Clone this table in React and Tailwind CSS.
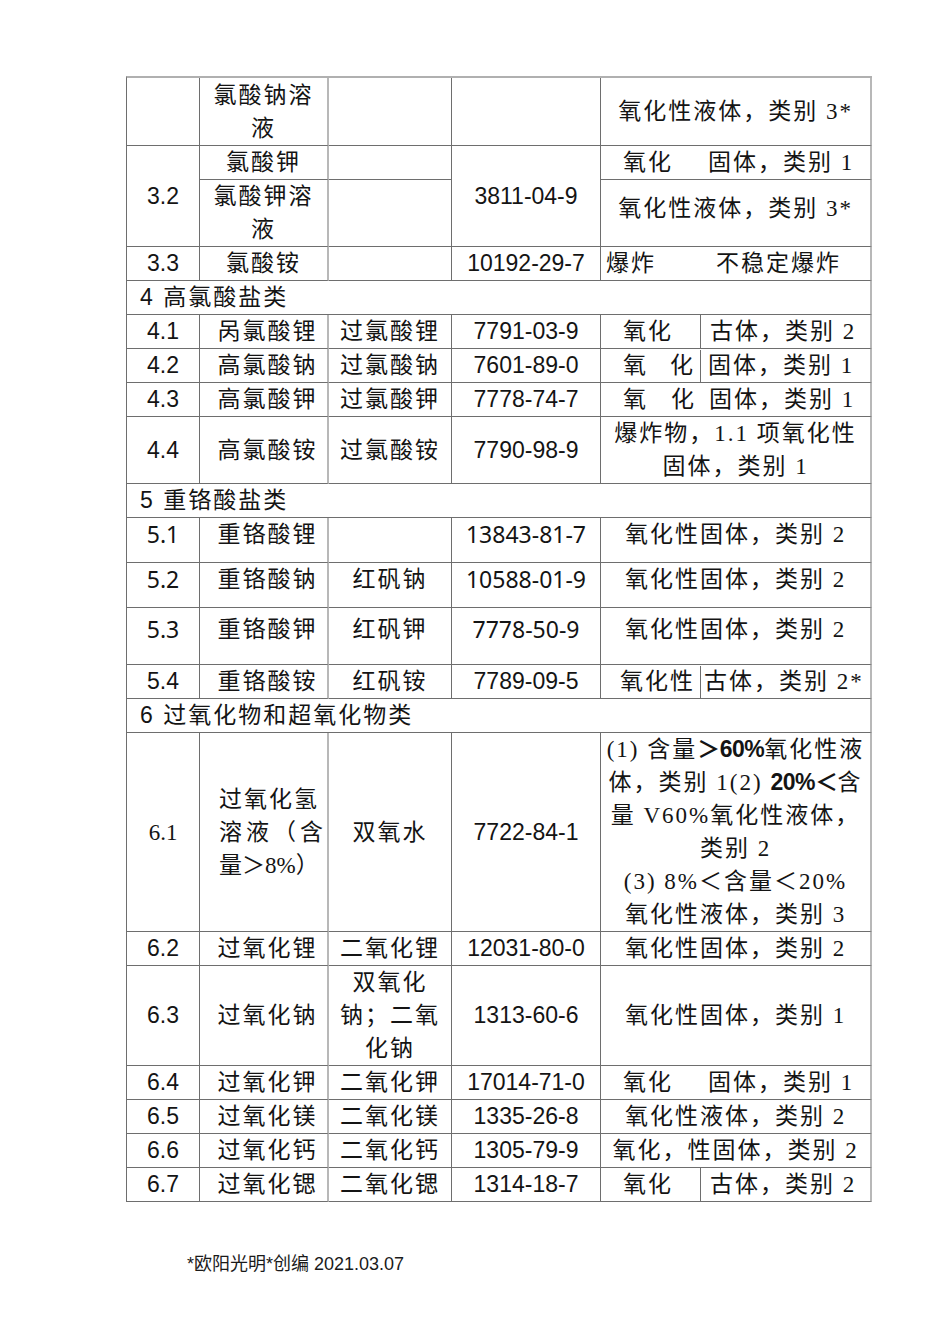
import React from 'react';

const SANS = "font-['Liberation_Sans','Noto_Sans_CJK_SC',sans-serif]";
const SERIF = "font-['Liberation_Serif','Noto_Sans_CJK_SC',serif]";

// right border variants: dark grid line, or the pale line used after the name column / at the table edge
const R_DARK = 'border-r border-r-[#6e6e6e]';
const R_PALE = 'border-r-2 border-r-[#b8b8b8]';

function Cell({ className = '', right = R_DARK, children, ...rest }) {
  return (
    <td
      className={`${right} border-b border-b-[#6e6e6e] p-0 text-center align-middle leading-[33px] text-[23px] text-[#141414] ${className}`}
      {...rest}
    >
      {children}
    </td>
  );
}

const Num = ({ children, serif, ...rest }) => (
  <Cell className={serif ? SERIF : SANS} {...rest}>{children}</Cell>
);
const Name = ({ children, className = '', ...rest }) => (
  <Cell right={R_PALE} className={`${SANS} tracking-[2px] ${className}`} {...rest}>{children}</Cell>
);
const Alias = ({ children, className = '', ...rest }) => (
  <Cell className={`${SANS} tracking-[2px] ${className}`} {...rest}>{children}</Cell>
);
const Cas = ({ children, ...rest }) => (
  <Cell className={SANS} {...rest}>{children}</Cell>
);
const Haz = ({ children, className = '', ...rest }) => (
  <Cell right={R_PALE} className={`${SERIF} tracking-[2px] ${className}`} {...rest}>{children}</Cell>
);

// hazard cell that is split (sometimes with a visible line) at x=700
function Split({ h, left, right, line, lcls, rcls }) {
  return (
    <div className={`flex ${h}`}>
      <div className={`w-[100px] shrink-0 text-left ${line ? 'border-r border-r-[#6e6e6e]' : ''} ${lcls}`}>{left}</div>
      <div className={`flex-1 text-left whitespace-nowrap ${rcls}`}>{right}</div>
    </div>
  );
}

function Header({ children }) {
  return (
    <tr className="h-[34px]">
      <Cell colSpan={5} right={R_PALE} className={`${SANS} tracking-[2px] text-left pl-[13px]`}>
        {children}
      </Cell>
    </tr>
  );
}

export default function App() {
  return (
    <div className="w-[950px] min-h-[1344px] bg-white pt-[76px]">
      <table className="ml-[126px] w-[745px] table-fixed border-separate border-spacing-0 border-l border-l-[#6e6e6e] border-t-2 border-t-[#b0b0b0]">
        <colgroup>
          <col className="w-[73px]" />
          <col className="w-[129px]" />
          <col className="w-[123px]" />
          <col className="w-[149px]" />
          <col className="w-[271px]" />
        </colgroup>
        <tbody>
          {/* 3.1 continued */}
          <tr className="h-[68px]">
            <Num></Num>
            <Name>氯酸钠溶<br />液</Name>
            <Alias></Alias>
            <Cas></Cas>
            <Haz>氧化性液体，类别 3*</Haz>
          </tr>

          <tr className="h-[34px]">
            <Num rowSpan={2}>3.2</Num>
            <Name>氯酸钾</Name>
            <Alias></Alias>
            <Cas rowSpan={2}>3811-04-9</Cas>
            <Haz>
              <Split h="h-[33px]" left="氧化" right="固体，类别 1" lcls="pl-[22px]" rcls="pl-[7px]" />
            </Haz>
          </tr>
          <tr className="h-[67px]">
            <Name>氯酸钾溶<br />液</Name>
            <Alias></Alias>
            <Haz className="pb-[10px]">氧化性液体，类别 3*</Haz>
          </tr>

          <tr className="h-[34px]">
            <Num>3.3</Num>
            <Name>氯酸铵</Name>
            <Alias></Alias>
            <Cas>10192-29-7</Cas>
            <Haz>
              <Split h="h-[33px]" left="爆炸" right="不稳定爆炸" lcls="pl-[5px]" rcls="pl-[15px]" />
            </Haz>
          </tr>

          <Header>4 高氯酸盐类</Header>

          <tr className="h-[34px]">
            <Num>4.1</Num>
            <Name className="pl-[8px]">呙氯酸锂</Name>
            <Alias>过氯酸锂</Alias>
            <Cas>7791-03-9</Cas>
            <Haz>
              <Split h="h-[33px]" line left="氧化" right="古体，类别 2" lcls="pl-[22px]" rcls="pl-[9px]" />
            </Haz>
          </tr>
          <tr className="h-[33px]">
            <Num>4.2</Num>
            <Name className="pl-[8px]">高氯酸钠</Name>
            <Alias>过氯酸钠</Alias>
            <Cas>7601-89-0</Cas>
            <Haz>
              <Split
                h="h-[32px] leading-[32px]"
                line
                left={<span className="flex justify-between"><span>氧</span><span>化</span></span>}
                right="固体，类别 1"
                lcls="pl-[22px] pr-[7px] tracking-normal"
                rcls="pl-[7px]"
              />
            </Haz>
          </tr>
          <tr className="h-[34px]">
            <Num>4.3</Num>
            <Name className="pl-[8px]">高氯酸钾</Name>
            <Alias>过氯酸钾</Alias>
            <Cas>7778-74-7</Cas>
            <Haz>
              <Split
                h="h-[33px]"
                left={<span className="flex justify-between"><span>氧</span><span>化</span></span>}
                right="固体，类别 1"
                lcls="pl-[22px] pr-[7px] tracking-normal"
                rcls="pl-[8px]"
              />
            </Haz>
          </tr>
          <tr className="h-[67px]">
            <Num>4.4</Num>
            <Name className="pl-[8px]">高氯酸铵</Name>
            <Alias>过氯酸铵</Alias>
            <Cas>7790-98-9</Cas>
            <Haz>爆炸物，1.1 项氧化性<br />固体，类别 1</Haz>
          </tr>

          <Header>5 重铬酸盐类</Header>

          <tr className="h-[45px]">
            <Num className="align-top">5.1</Num>
            <Name className="align-top pl-[8px]">重铬酸锂</Name>
            <Alias className="align-top"></Alias>
            <Cas className="align-top">13843-81-7</Cas>
            <Haz className="align-top">氧化性固体，类别 2</Haz>
          </tr>
          <tr className="h-[45px]">
            <Num className="align-top">5.2</Num>
            <Name className="align-top pl-[8px]">重铬酸钠</Name>
            <Alias className="align-top">红矾钠</Alias>
            <Cas className="align-top">10588-01-9</Cas>
            <Haz className="align-top">氧化性固体，类别 2</Haz>
          </tr>
          <tr className="h-[57px]">
            <Num className="align-top pt-[5px]">5.3</Num>
            <Name className="align-top pt-[5px] pl-[8px]">重铬酸钾</Name>
            <Alias className="align-top pt-[5px]">红矾钾</Alias>
            <Cas className="align-top pt-[5px]">7778-50-9</Cas>
            <Haz className="align-top pt-[5px]">氧化性固体，类别 2</Haz>
          </tr>
          <tr className="h-[33px]">
            <Num>5.4</Num>
            <Name className="pl-[8px]">重铬酸铵</Name>
            <Alias>红矾铵</Alias>
            <Cas>7789-09-5</Cas>
            <Haz>
              <Split h="h-[32px] leading-[32px]" line left="氧化性" right="古体，类别 2*" lcls="pl-[19px]" rcls="pl-[3px]" />
            </Haz>
          </tr>

          <Header>6 过氧化物和超氧化物类</Header>

          <tr className="h-[199px]">
            <Num serif>6.1</Num>
            <Name className="text-left pl-[19px] tracking-normal">
              <div className="tracking-[2px]">过氧化氢</div>
              <div className="flex w-[104px] justify-between">
                <span>溶</span><span>液</span><span>（</span><span>含</span>
              </div>
              <div className={SERIF}>量＞8%）</div>
            </Name>
            <Alias>双氧水</Alias>
            <Cas>7722-84-1</Cas>
            <Haz className="whitespace-nowrap tracking-[1px]">
              <div>(1) 含量<b className={`${SANS} font-bold tracking-[-0.5px]`}>＞60%</b>氧化性液</div>
              <div>体，类别 1(2) <b className={`${SANS} font-bold tracking-[-0.5px]`}>20%＜</b>含</div>
              <div>量 V60%氧化性液体，</div>
              <div>类别 2</div>
              <div>(3) 8%＜含量＜20%</div>
              <div>氧化性液体，类别 3</div>
            </Haz>
          </tr>
          <tr className="h-[34px]">
            <Num>6.2</Num>
            <Name className="pl-[8px]">过氧化锂</Name>
            <Alias>二氧化锂</Alias>
            <Cas>12031-80-0</Cas>
            <Haz>氧化性固体，类别 2</Haz>
          </tr>
          <tr className="h-[100px]">
            <Num>6.3</Num>
            <Name className="pl-[8px]">过氧化钠</Name>
            <Alias>双氧化<br />钠；二氧<br />化钠</Alias>
            <Cas>1313-60-6</Cas>
            <Haz>氧化性固体，类别 1</Haz>
          </tr>
          <tr className="h-[34px]">
            <Num>6.4</Num>
            <Name className="pl-[8px]">过氧化钾</Name>
            <Alias>二氧化钾</Alias>
            <Cas>17014-71-0</Cas>
            <Haz>
              <Split h="h-[33px]" left="氧化" right="固体，类别 1" lcls="pl-[22px]" rcls="pl-[7px]" />
            </Haz>
          </tr>
          <tr className="h-[34px]">
            <Num>6.5</Num>
            <Name className="pl-[8px]">过氧化镁</Name>
            <Alias>二氧化镁</Alias>
            <Cas>1335-26-8</Cas>
            <Haz>氧化性液体，类别 2</Haz>
          </tr>
          <tr className="h-[34px]">
            <Num>6.6</Num>
            <Name className="pl-[8px]">过氧化钙</Name>
            <Alias>二氧化钙</Alias>
            <Cas>1305-79-9</Cas>
            <Haz className="whitespace-nowrap">氧化，性固体，类别 2</Haz>
          </tr>
          <tr className="h-[34px]">
            <Num>6.7</Num>
            <Name className="pl-[8px]">过氧化锶</Name>
            <Alias>二氧化锶</Alias>
            <Cas>1314-18-7</Cas>
            <Haz>
              <Split h="h-[33px]" line left="氧化" right="古体，类别 2" lcls="pl-[22px]" rcls="pl-[9px]" />
            </Haz>
          </tr>
        </tbody>
      </table>

      <p className={`mt-[50px] ml-[187px] text-[18px] leading-[24px] text-[#1a1a1a] ${SANS}`}>
        *欧阳光明*创编 2021.03.07
      </p>
    </div>
  );
}
